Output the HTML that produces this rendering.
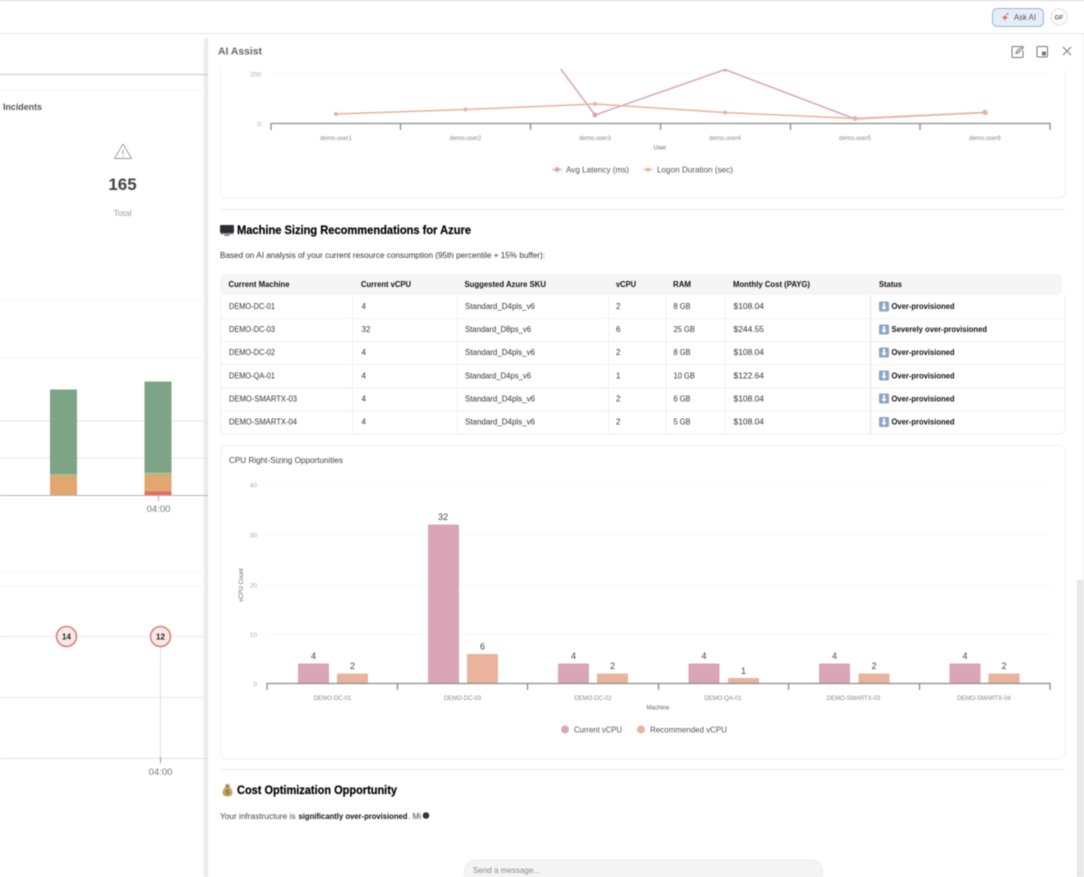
<!DOCTYPE html>
<html lang="en"><head><meta charset="utf-8"><title>AI Assist</title>
<style>
html,body{margin:0;padding:0;background:#fff;width:1084px;height:877px;overflow:hidden}
svg{display:block;filter:blur(.45px)}
text{font-family:"Liberation Sans",sans-serif;fill:#333}
.th{font-size:8px;font-weight:700;fill:#111}
.td{font-size:8px;fill:#333}
.st{font-size:8px;font-weight:700;fill:#111}
.ax{font-size:6px;fill:#888;text-anchor:middle}
.yl{font-size:6.5px;fill:#aaa;text-anchor:end}
.v{font-size:9px;fill:#444;text-anchor:middle}
.lg{font-size:8.5px;fill:#555}
.h{font-size:12px;font-weight:700;fill:#000;stroke:#000;stroke-width:.2px}
.d{stroke:#f0f0f0;stroke-width:1;stroke-dasharray:2 2;fill:none}
.t{stroke:#8a8a8a;stroke-width:1.300;fill:none}
.p{fill:#dba5b8}.o{fill:#e9b39d}
.r{stroke:#f0f0f0;stroke-width:1;fill:none}
</style></head><body>
<svg width="1084" height="877" viewBox="0 0 1084 877" xmlns="http://www.w3.org/2000/svg">
<rect width="1084" height="877" fill="#fff"/>
<!-- top bar -->
<rect x="0" y="0" width="1084" height="1" fill="#d8d8d8"/>
<rect x="0" y="33" width="1084" height="1" fill="#e6e6e6"/>
<rect x="992.500" y="8.500" width="51" height="18" rx="5" fill="#e5eef8" stroke="#9db5d0"/>
<path d="M1001.500 17.500l2.500-.8 1-2.500 1 2.500 2.500.8-2.500.9-1 2.500-1-2.500z" fill="#e2604c"/>
<circle cx="1007.500" cy="14" r="1" fill="#e2604c"/>
<text x="1014" y="20" font-size="8" textLength="22" lengthAdjust="spacingAndGlyphs" style="fill:#555">Ask AI</text>
<circle cx="1059" cy="17" r="8" fill="#fff" stroke="#ddd"/>
<text x="1059" y="19.500" font-size="6.500" font-weight="700" text-anchor="middle" style="fill:#666">GF</text>

<!-- panel edge -->
<rect x="203" y="40" width="2" height="837" fill="#f5f5f5"/>
<rect x="205" y="38" width="3" height="839" fill="#e9e9e9"/>

<!-- left dashboard -->
<rect x="0" y="74" width="208" height="1" fill="#c6c6c6"/>
<rect x="0" y="90" width="204" height="1" fill="#f4f4f4"/>
<text x="3" y="110" font-size="9" font-weight="700" style="fill:#555" textLength="39" lengthAdjust="spacingAndGlyphs">Incidents</text>
<path d="M123 144l8.500 14.500h-17z" fill="none" stroke="#999" stroke-width=".9" stroke-linejoin="round"/>
<path d="M123 149.500v5M123 156v1" stroke="#999" stroke-width=".9"/>
<text x="122.500" y="190" font-size="17" font-weight="700" text-anchor="middle" style="fill:#444">165</text>
<text x="122.500" y="216" font-size="8.500" text-anchor="middle" style="fill:#999">Total</text>
<rect x="0" y="300" width="204" height="1" fill="#f6f6f6"/>
<rect x="0" y="357" width="204" height="1" fill="#f4f4f4"/>
<rect x="0" y="420.500" width="208" height="1" fill="#e6e6e6"/>
<rect x="0" y="457.500" width="208" height="1" fill="#e6e6e6"/>
<rect x="50" y="389.500" width="27" height="85" fill="#7ea486"/>
<rect x="50" y="474" width="27" height="1.500" fill="#a4c29a"/>
<rect x="50" y="475.500" width="27" height="20" fill="#e2a76e"/>
<rect x="144.500" y="381.500" width="27" height="91" fill="#7ea486"/>
<rect x="144.500" y="472.500" width="27" height="2" fill="#a4c29a"/>
<rect x="144.500" y="474.500" width="27" height="17" fill="#e2a76e"/>
<rect x="144.500" y="491.500" width="27" height="4" fill="#e86a62"/>
<rect x="0" y="495" width="208" height="1" fill="#b5b5b5"/>
<rect x="158" y="496" width="1" height="5" fill="#aaa"/>
<text x="158.500" y="512" font-size="9.500" text-anchor="middle" style="fill:#777">04:00</text>
<rect x="0" y="571" width="204" height="1" fill="#f6f6f6"/>
<rect x="0" y="586" width="204" height="1" fill="#f3f3f3"/>
<rect x="0" y="636" width="208" height="1" fill="#e8e8e8"/>
<rect x="0" y="697" width="208" height="1" fill="#e8e8e8"/>
<rect x="0" y="758" width="208" height="1" fill="#e2e2e2"/>
<rect x="160" y="646" width="1" height="116" fill="#ddd"/>
<rect x="160" y="757" width="1" height="6" fill="#999"/>
<circle cx="66.500" cy="636.500" r="10" fill="#f8e9e7" stroke="#dd7a74" stroke-width="1.500"/>
<text x="66.500" y="639.500" font-size="8" font-weight="700" text-anchor="middle" style="fill:#222">14</text>
<circle cx="160.500" cy="636.500" r="10" fill="#f8e9e7" stroke="#dd7a74" stroke-width="1.500"/>
<text x="160.500" y="639.500" font-size="8" font-weight="700" text-anchor="middle" style="fill:#222">12</text>
<text x="160.500" y="775" font-size="9.500" text-anchor="middle" style="fill:#777">04:00</text>

<!-- chart 1 card -->
<path d="M220.500 70V192a6 6 0 0 0 6 6H1059a6 6 0 0 0 6-6V70" fill="none" stroke="#f0f0f0"/>
<line class="d" x1="271" y1="73.500" x2="1050" y2="73.500"/>
<text class="yl" x="261" y="76.500">200</text>
<text class="yl" x="261" y="126.500">0</text>
<path class="t" d="M271 130v-6.500H1050v6.500M400.500 124v6M530.500 124v6M660.500 124v6M790.500 124v6M920 124v6"/>
<text class="ax" x="336" y="140">demo.user1</text>
<text class="ax" x="465.500" y="140">demo.user2</text>
<text class="ax" x="595" y="140">demo.user3</text>
<text class="ax" x="725" y="140">demo.user4</text>
<text class="ax" x="855" y="140">demo.user5</text>
<text class="ax" x="985" y="140">demo.user6</text>
<text class="ax" x="660" y="149.500" style="fill:#666">User</text>
<path d="M560 68L595 115L725 69.500L855 119L985 112.500" fill="none" stroke="#dba5b8" stroke-width="1.500"/>
<path d="M336 114L465.500 109.500L595 104L725 112.500L855 118.500L985 112.500" fill="none" stroke="#e9b39d" stroke-width="1.500"/>
<g fill="#dba5b8"><circle cx="595" cy="115" r="2.500"/><circle cx="725" cy="69.500" r="2.200"/></g>
<g fill="#e9b39d"><circle cx="336" cy="114" r="2"/><circle cx="465.500" cy="109.500" r="2"/><circle cx="595" cy="104" r="2"/><circle cx="725" cy="112.500" r="2"/><circle cx="855" cy="118.500" r="2.500"/><circle cx="985" cy="112.500" r="2.700"/></g>
<path d="M552 169.500h10" stroke="#dba5b8" stroke-width="1.200"/><circle cx="557" cy="169.500" r="2.500" fill="#dba5b8"/>
<text class="lg" x="566" y="172.500" textLength="63" lengthAdjust="spacingAndGlyphs">Avg Latency (ms)</text>
<path d="M643 169.500h10" stroke="#e9b39d" stroke-width="1.200"/><circle cx="648" cy="169.500" r="2" fill="#e9b39d"/>
<text class="lg" x="657" y="172.500" textLength="76" lengthAdjust="spacingAndGlyphs">Logon Duration (sec)</text>
<rect x="220" y="209" width="845" height="1" fill="#e8e8e8"/>

<!-- machine sizing -->
<rect x="220" y="225" width="14" height="8" rx="1" fill="#2c2c34"/>
<rect x="220.500" y="233" width="13" height="1.500" fill="#9a9a9a"/>
<rect x="224.500" y="234.500" width="5" height="1.500" fill="#8a8a8a"/>
<text class="h" x="237" y="234" textLength="234" lengthAdjust="spacingAndGlyphs">Machine Sizing Recommendations for Azure</text>
<text x="220" y="258" font-size="8" style="fill:#333" textLength="325" lengthAdjust="spacingAndGlyphs">Based on AI analysis of your current resource consumption (95th percentile + 15% buffer):</text>

<!-- table -->
<rect x="220" y="274" width="842" height="21" rx="5" fill="#f5f5f5"/>
<path d="M220.500 295V428a6 6 0 0 0 6 6H1059a6 6 0 0 0 6-6V295" fill="none" stroke="#eeeeee"/>
<path class="r" d="M220 318.500H1065M220 341.500H1065M220 364.500H1065M220 388H1065M220 411H1065"/>
<path class="r" d="M352.500 295V434M457.500 295V434M608.500 295V434M666 295V434M725.500 295V434"/>
<path d="M870.500 295V434" stroke="#e0e0e0" fill="none"/>
<text class="th" x="228.500" y="287" textLength="61" lengthAdjust="spacingAndGlyphs">Current Machine</text>
<text class="th" x="361" y="287" textLength="50" lengthAdjust="spacingAndGlyphs">Current vCPU</text>
<text class="th" x="464.500" y="287" textLength="81.500" lengthAdjust="spacingAndGlyphs">Suggested Azure SKU</text>
<text class="th" x="616" y="287" textLength="20" lengthAdjust="spacingAndGlyphs">vCPU</text>
<text class="th" x="673" y="287" textLength="18" lengthAdjust="spacingAndGlyphs">RAM</text>
<text class="th" x="733" y="287" textLength="77" lengthAdjust="spacingAndGlyphs">Monthly Cost (PAYG)</text>
<text class="th" x="879" y="287" textLength="23" lengthAdjust="spacingAndGlyphs">Status</text>

<text class="td" x="229" y="309" textLength="46" lengthAdjust="spacingAndGlyphs">DEMO-DC-01</text><text class="td" x="361.500" y="309">4</text><text class="td" x="465" y="309" textLength="70" lengthAdjust="spacingAndGlyphs">Standard_D4pls_v6</text><text class="td" x="616" y="309">2</text><text class="td" x="673.500" y="309" textLength="17" lengthAdjust="spacingAndGlyphs">8 GB</text><text class="td" x="733.500" y="309" textLength="30.500" lengthAdjust="spacingAndGlyphs">$108.04</text>
<text class="td" x="229" y="332" textLength="46" lengthAdjust="spacingAndGlyphs">DEMO-DC-03</text><text class="td" x="361.500" y="332">32</text><text class="td" x="465" y="332" textLength="66" lengthAdjust="spacingAndGlyphs">Standard_D8ps_v6</text><text class="td" x="616" y="332">6</text><text class="td" x="673.500" y="332" textLength="21.500" lengthAdjust="spacingAndGlyphs">25 GB</text><text class="td" x="733.500" y="332" textLength="30.500" lengthAdjust="spacingAndGlyphs">$244.55</text>
<text class="td" x="229" y="355" textLength="46" lengthAdjust="spacingAndGlyphs">DEMO-DC-02</text><text class="td" x="361.500" y="355">4</text><text class="td" x="465" y="355" textLength="70" lengthAdjust="spacingAndGlyphs">Standard_D4pls_v6</text><text class="td" x="616" y="355">2</text><text class="td" x="673.500" y="355" textLength="17" lengthAdjust="spacingAndGlyphs">8 GB</text><text class="td" x="733.500" y="355" textLength="30.500" lengthAdjust="spacingAndGlyphs">$108.04</text>
<text class="td" x="229" y="378.500" textLength="46" lengthAdjust="spacingAndGlyphs">DEMO-QA-01</text><text class="td" x="361.500" y="378.500">4</text><text class="td" x="465" y="378.500" textLength="66" lengthAdjust="spacingAndGlyphs">Standard_D4ps_v6</text><text class="td" x="616" y="378.500">1</text><text class="td" x="673.500" y="378.500" textLength="21.500" lengthAdjust="spacingAndGlyphs">10 GB</text><text class="td" x="733.500" y="378.500" textLength="30.500" lengthAdjust="spacingAndGlyphs">$122.64</text>
<text class="td" x="229" y="401.500" textLength="68" lengthAdjust="spacingAndGlyphs">DEMO-SMARTX-03</text><text class="td" x="361.500" y="401.500">4</text><text class="td" x="465" y="401.500" textLength="70" lengthAdjust="spacingAndGlyphs">Standard_D4pls_v6</text><text class="td" x="616" y="401.500">2</text><text class="td" x="673.500" y="401.500" textLength="17" lengthAdjust="spacingAndGlyphs">6 GB</text><text class="td" x="733.500" y="401.500" textLength="30.500" lengthAdjust="spacingAndGlyphs">$108.04</text>
<text class="td" x="229" y="424.500" textLength="68" lengthAdjust="spacingAndGlyphs">DEMO-SMARTX-04</text><text class="td" x="361.500" y="424.500">4</text><text class="td" x="465" y="424.500" textLength="70" lengthAdjust="spacingAndGlyphs">Standard_D4pls_v6</text><text class="td" x="616" y="424.500">2</text><text class="td" x="673.500" y="424.500" textLength="17" lengthAdjust="spacingAndGlyphs">5 GB</text><text class="td" x="733.500" y="424.500" textLength="30.500" lengthAdjust="spacingAndGlyphs">$108.04</text>

<g fill="#8aa6c6">
<rect x="879" y="301.500" width="10" height="10" rx="1.500"/><rect x="879" y="324.500" width="10" height="10" rx="1.500"/><rect x="879" y="347.500" width="10" height="10" rx="1.500"/><rect x="879" y="370.500" width="10" height="10" rx="1.500"/><rect x="879" y="393.500" width="10" height="10" rx="1.500"/><rect x="879" y="417" width="10" height="10" rx="1.500"/>
</g>
<g fill="#fff">
<path d="M883 303h2v4h1.800l-2.800 3-2.800-3H883z"/><path d="M883 326h2v4h1.800l-2.800 3-2.800-3H883z"/><path d="M883 349h2v4h1.800l-2.800 3-2.800-3H883z"/><path d="M883 372h2v4h1.800l-2.800 3-2.800-3H883z"/><path d="M883 395h2v4h1.800l-2.800 3-2.800-3H883z"/><path d="M883 418.500h2v4h1.800l-2.800 3-2.800-3H883z"/>
</g>
<text class="st" x="891.500" y="309" textLength="63" lengthAdjust="spacingAndGlyphs">Over-provisioned</text>
<text class="st" x="891.500" y="332" textLength="95.500" lengthAdjust="spacingAndGlyphs">Severely over-provisioned</text>
<text class="st" x="891.500" y="355" textLength="63" lengthAdjust="spacingAndGlyphs">Over-provisioned</text>
<text class="st" x="891.500" y="378.500" textLength="63" lengthAdjust="spacingAndGlyphs">Over-provisioned</text>
<text class="st" x="891.500" y="401.500" textLength="63" lengthAdjust="spacingAndGlyphs">Over-provisioned</text>
<text class="st" x="891.500" y="424.500" textLength="63" lengthAdjust="spacingAndGlyphs">Over-provisioned</text>

<!-- chart 2 -->
<rect x="220.500" y="445.500" width="844.500" height="313.500" rx="6" fill="none" stroke="#f0f0f0"/>
<text x="229" y="463" font-size="8" style="fill:#444" textLength="114" lengthAdjust="spacingAndGlyphs">CPU Right-Sizing Opportunities</text>
<line class="d" x1="267" y1="485" x2="1050" y2="485"/>
<line class="d" x1="267" y1="534.500" x2="1050" y2="534.500"/>
<line class="d" x1="267" y1="584.500" x2="1050" y2="584.500"/>
<line class="d" x1="267" y1="634.500" x2="1050" y2="634.500"/>
<text class="yl" x="257" y="487.500">40</text>
<text class="yl" x="257" y="537.500">30</text>
<text class="yl" x="257" y="587.500">20</text>
<text class="yl" x="257" y="637">10</text>
<text class="yl" x="257" y="686.500">0</text>
<text x="241" y="585" font-size="6" text-anchor="middle" transform="rotate(-90 241 585)" dy="2" style="fill:#666">vCPU Count</text>

<rect class="p" x="298" y="663.500" width="31" height="20.500" rx="1"/><rect class="o" x="337" y="673.500" width="31" height="10.500" rx="1"/>
<rect class="p" x="428" y="524.500" width="31" height="159.500" rx="1"/><rect class="o" x="467" y="654" width="31" height="30" rx="1"/>
<rect class="p" x="558" y="663.500" width="31" height="20.500" rx="1"/><rect class="o" x="597" y="673.500" width="31" height="10.500" rx="1"/>
<rect class="p" x="688.500" y="663.500" width="31" height="20.500" rx="1"/><rect class="o" x="728" y="678" width="31" height="6" rx="1"/>
<rect class="p" x="819" y="663.500" width="31" height="20.500" rx="1"/><rect class="o" x="858.500" y="673.500" width="31" height="10.500" rx="1"/>
<rect class="p" x="949.500" y="663.500" width="31" height="20.500" rx="1"/><rect class="o" x="988.500" y="673.500" width="31" height="10.500" rx="1"/>

<text class="v" x="313.500" y="659">4</text><text class="v" x="352.500" y="669">2</text>
<text class="v" x="443" y="520">32</text><text class="v" x="482.500" y="649.500">6</text>
<text class="v" x="573.500" y="659">4</text><text class="v" x="612.500" y="669">2</text>
<text class="v" x="704" y="659">4</text><text class="v" x="743.500" y="674">1</text>
<text class="v" x="834.500" y="659">4</text><text class="v" x="874" y="669">2</text>
<text class="v" x="965" y="659">4</text><text class="v" x="1004" y="669">2</text>

<path class="t" d="M267 690v-6.500H1050v6.500M397.500 684v6M527.500 684v6M658.500 684v6M788.500 684v6M919.500 684v6"/>
<text class="ax" x="332.500" y="700">DEMO-DC-01</text>
<text class="ax" x="462.500" y="700">DEMO-DC-03</text>
<text class="ax" x="593" y="700">DEMO-DC-02</text>
<text class="ax" x="723" y="700">DEMO-QA-01</text>
<text class="ax" x="853.500" y="700">DEMO-SMARTX-03</text>
<text class="ax" x="984" y="700">DEMO-SMARTX-04</text>
<text class="ax" x="658" y="709.500" style="fill:#666">Machine</text>
<circle cx="565" cy="729.500" r="4" fill="#dba5b8"/>
<text class="lg" x="574" y="732.500" textLength="48" lengthAdjust="spacingAndGlyphs">Current vCPU</text>
<circle cx="641" cy="729.500" r="4" fill="#e9b39d"/>
<text class="lg" x="650" y="732.500" textLength="77" lengthAdjust="spacingAndGlyphs">Recommended vCPU</text>
<rect x="220" y="769" width="845" height="1" fill="#e8e8e8"/>

<!-- cost -->
<path d="M225 784h5l-1.200 2.500c2.500 1.500 3.700 4 3.700 6.500 0 2-1.500 3.500-5 3.500s-5-1.500-5-3.500c0-2.500 1.200-5 3.700-6.500z" fill="#c9a468"/>
<rect x="225.500" y="786" width="4" height="1" fill="#7a5b2c"/>
<text x="227.500" y="794.500" font-size="7" font-weight="700" text-anchor="middle" style="fill:#5e7a3a">$</text>
<text class="h" x="237" y="794" textLength="160" lengthAdjust="spacingAndGlyphs">Cost Optimization Opportunity</text>
<text x="220" y="819" font-size="8" style="fill:#444" textLength="75.500" lengthAdjust="spacingAndGlyphs">Your infrastructure is</text>
<text x="298.500" y="819" font-size="8" font-weight="700" style="fill:#111" textLength="109" lengthAdjust="spacingAndGlyphs">significantly over-provisioned</text>
<text x="408" y="819" font-size="8" style="fill:#444" textLength="13" lengthAdjust="spacingAndGlyphs">. Mi</text>
<circle cx="426" cy="815.500" r="3.300" fill="#333"/>

<!-- input -->
<path d="M464.500 877V871a11 11 0 0 1 11-11H811a11 11 0 0 1 11.500 11V877z" fill="#f4f4f4" stroke="#ececec"/>
<text x="473" y="873" font-size="8.500" style="fill:#888" textLength="67" lengthAdjust="spacingAndGlyphs">Send a message...</text>

<!-- panel header -->
<rect x="209" y="34" width="859" height="35" fill="#fff"/>
<text x="218" y="54.500" font-size="10" font-weight="700" style="fill:#666" textLength="44" lengthAdjust="spacingAndGlyphs">AI Assist</text>
<path d="M1020 46.500h-7a1 1 0 0 0-1 1v9a1 1 0 0 0 1 1h9a1 1 0 0 0 1-1v-6" fill="none" stroke="#777" stroke-width="1"/>
<path d="M1016 53.500l.5-2 5.500-5.500 1.500 1.500-5.500 5.500z" fill="none" stroke="#777" stroke-width="1"/>
<rect x="1037" y="46.500" width="10.500" height="10.500" rx="1.200" fill="none" stroke="#777"/>
<rect x="1042" y="51.500" width="4" height="4" fill="#777"/>
<path d="M1063 47l8 8M1071 47l-8 8" stroke="#777" stroke-width="1" fill="none"/>

<!-- scrollbar -->
<rect x="1083" y="34" width="1" height="546" fill="#f3f3f3"/>
<rect x="1077" y="580" width="7" height="297" fill="#e8e8e8"/>
</svg>
</body></html>
